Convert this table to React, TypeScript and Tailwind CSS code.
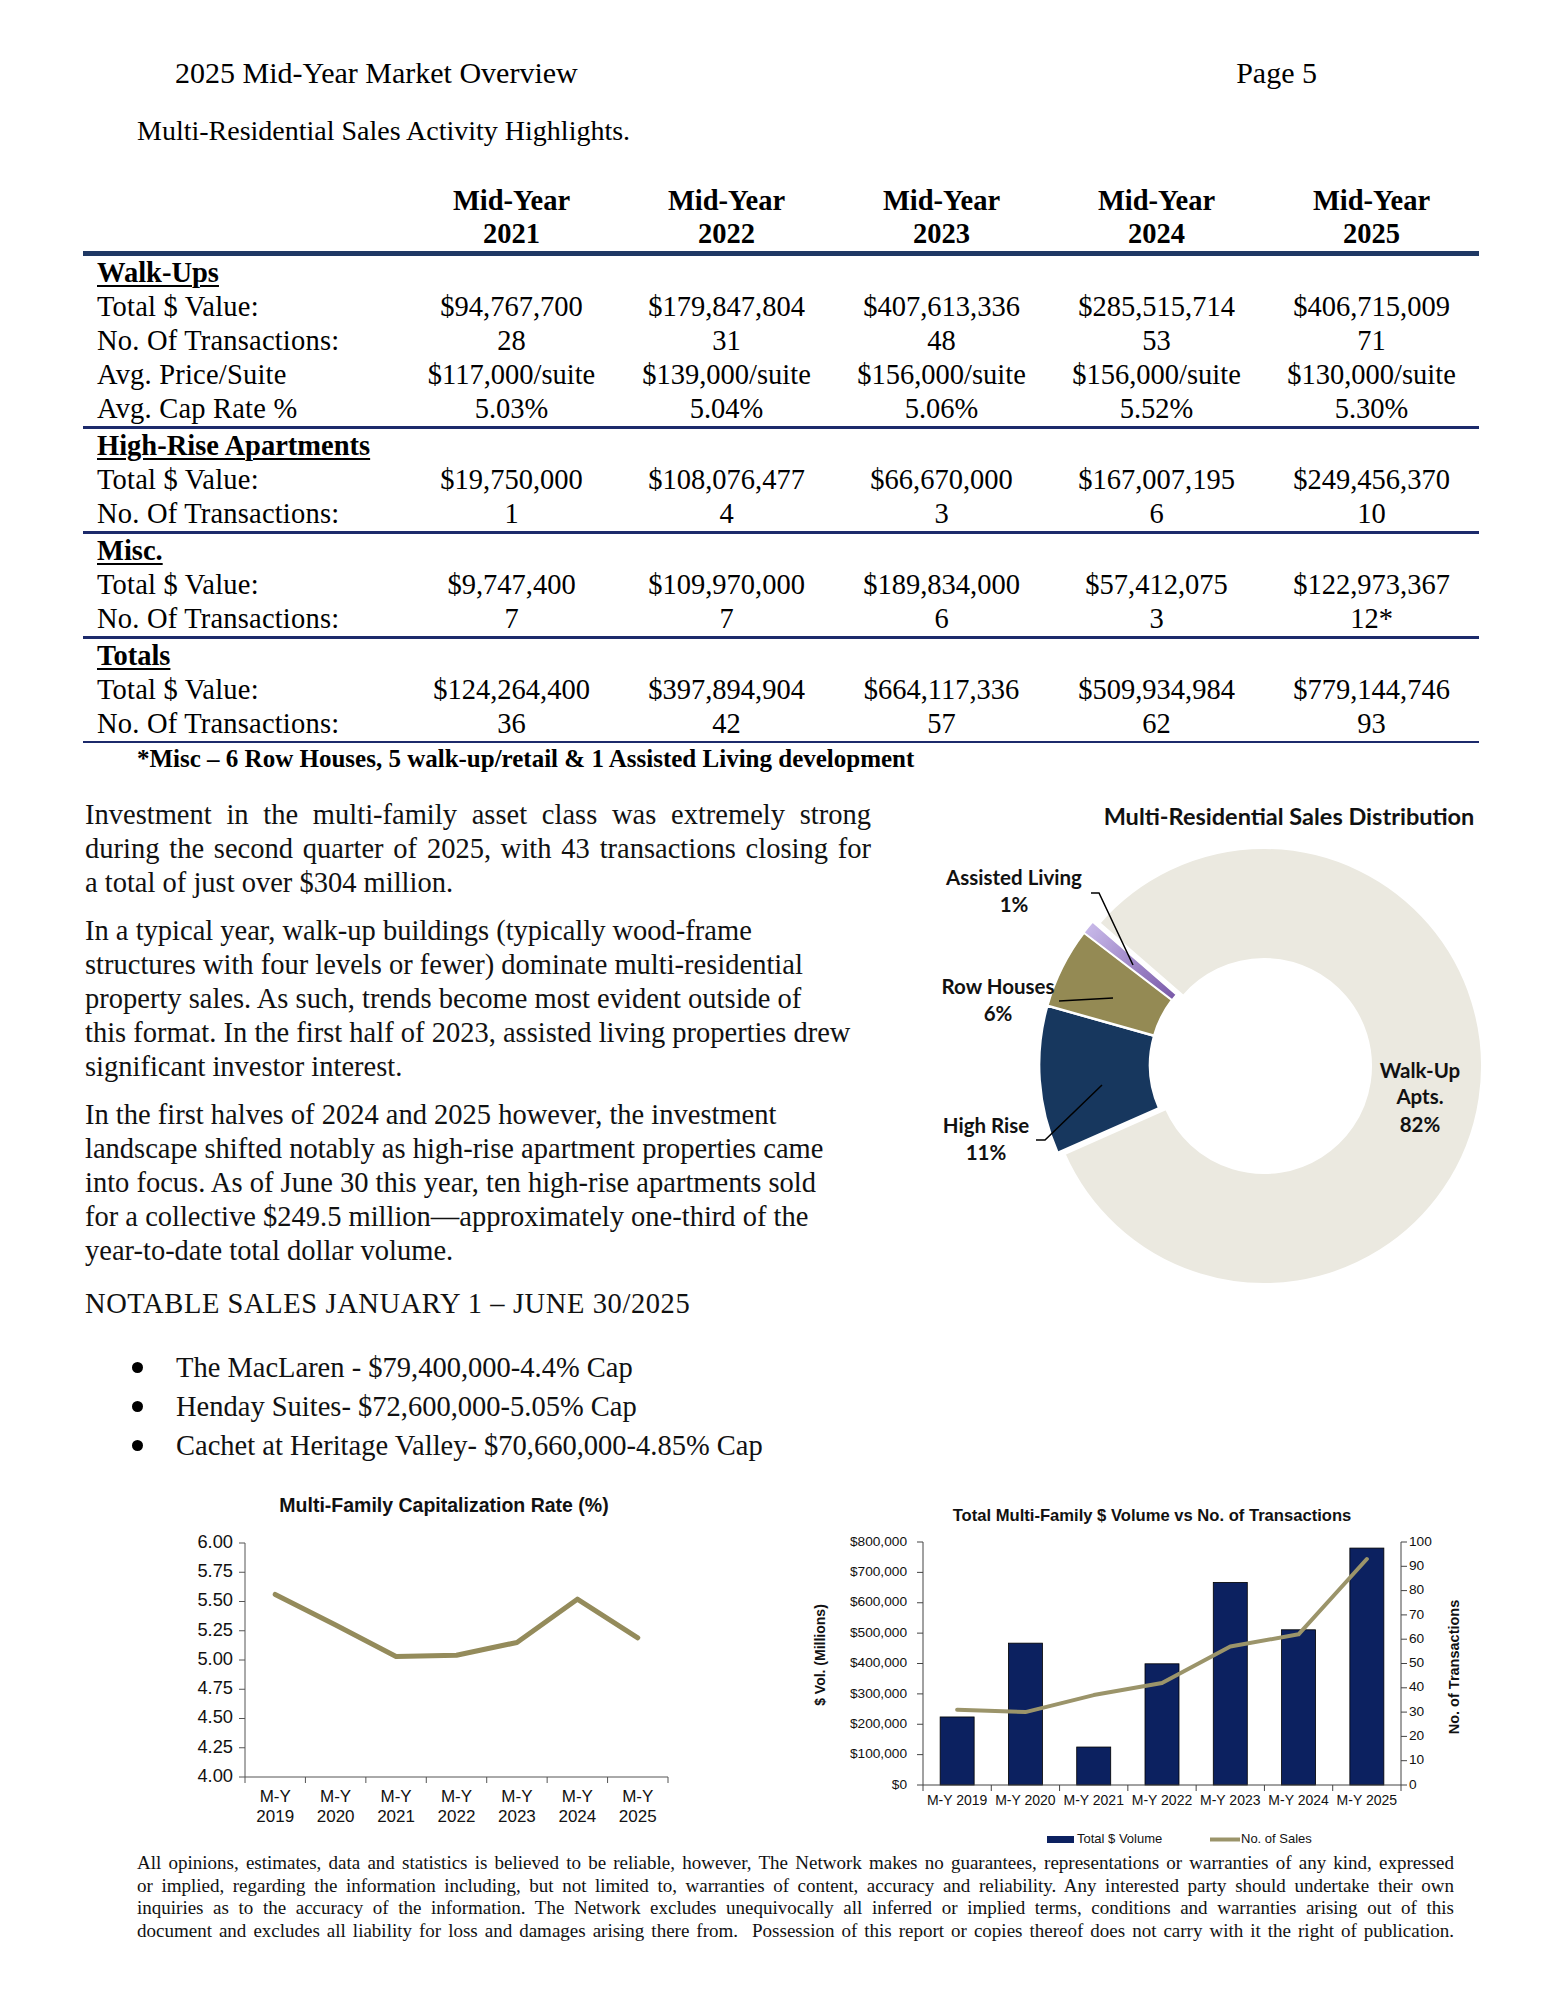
import React from "react";

const years = ["2021", "2022", "2023", "2024", "2025"];

type Row = { label: string; values: string[] };
type Section = { title: string; rows: Row[]; thin?: boolean };

const sections: Section[] = [
  {
    title: "Walk-Ups",
    rows: [
      { label: "Total $ Value:", values: ["$94,767,700", "$179,847,804", "$407,613,336", "$285,515,714", "$406,715,009"] },
      { label: "No. Of Transactions:", values: ["28", "31", "48", "53", "71"] },
      { label: "Avg. Price/Suite", values: ["$117,000/suite", "$139,000/suite", "$156,000/suite", "$156,000/suite", "$130,000/suite"] },
      { label: "Avg. Cap Rate %", values: ["5.03%", "5.04%", "5.06%", "5.52%", "5.30%"] },
    ],
  },
  {
    title: "High-Rise Apartments",
    rows: [
      { label: "Total $ Value:", values: ["$19,750,000", "$108,076,477", "$66,670,000", "$167,007,195", "$249,456,370"] },
      { label: "No. Of Transactions:", values: ["1", "4", "3", "6", "10"] },
    ],
  },
  {
    title: "Misc.",
    rows: [
      { label: "Total $ Value:", values: ["$9,747,400", "$109,970,000", "$189,834,000", "$57,412,075", "$122,973,367"] },
      { label: "No. Of Transactions:", values: ["7", "7", "6", "3", "12*"] },
    ],
  },
  {
    title: "Totals",
    thin: true,
    rows: [
      { label: "Total $ Value:", values: ["$124,264,400", "$397,894,904", "$664,117,336", "$509,934,984", "$779,144,746"] },
      { label: "No. Of Transactions:", values: ["36", "42", "57", "62", "93"] },
    ],
  },
];

function Table() {
  return (
    <div className="ml-[83px] w-[1396px] mt-[36px]">
      <div className="flex font-bold text-[28.5px] leading-[33px]">
        <div className="w-[321px]" />
        {years.map((y) => (
          <div key={y} className="w-[215px] text-center">
            <div>Mid-Year</div>
            <div>{y}</div>
          </div>
        ))}
      </div>
      <div className="mt-[1px] h-[5px] bg-[#1f3864]" />
      {sections.map((s) => (
        <div
          key={s.title}
          className={
            s.thin
              ? "border-b-[2px] border-[#1c2a6b]"
              : "border-b-[3px] border-[#1c2a6b]"
          }
        >
          <div className="h-[34px] leading-[34px] pl-[14px] text-[28.5px] font-bold underline decoration-[1.5px] underline-offset-[3px]">
            {s.title}
          </div>
          {s.rows.map((r) => (
            <div key={r.label} className="flex h-[34px] leading-[34px] text-[28.5px]">
              <div className="w-[321px] pl-[14px] whitespace-nowrap tracking-[0.2px]">{r.label}</div>
              {r.values.map((v, i) => (
                <div key={i} className="w-[215px] text-center whitespace-nowrap">
                  {v}
                </div>
              ))}
            </div>
          ))}
        </div>
      ))}
      <div className="h-[32px] leading-[32px] pl-[54px] text-[25px] font-bold whitespace-nowrap">
        *Misc – 6 Row Houses, 5 walk-up/retail &amp; 1 Assisted Living development
      </div>
    </div>
  );
}

function arc(cx: number, cy: number, R: number, r: number, a0: number, a1: number) {
  const rad = (a: number) => (a * Math.PI) / 180;
  const p = (rr: number, a: number) => [cx + rr * Math.cos(rad(a)), cy + rr * Math.sin(rad(a))];
  const large = a1 - a0 > 180 ? 1 : 0;
  const [x0, y0] = p(R, a0);
  const [x1, y1] = p(R, a1);
  const [x2, y2] = p(r, a1);
  const [x3, y3] = p(r, a0);
  return `M${x0} ${y0} A${R} ${R} 0 ${large} 1 ${x1} ${y1} L${x2} ${y2} A${r} ${r} 0 ${large} 0 ${x3} ${y3} Z`;
}

function Donut() {
  const cx = 1264;
  const cy = 1066;
  const R = 218;
  const r = 107;
  const dx = -6.9;
  const dy = -1.05;
  const lbl = "font-['Lato',sans-serif] font-bold text-[20.5px]";
  return (
    <svg width={645} height={520} viewBox="900 780 645 520" className="block">
      <defs>
        <radialGradient id="alg" gradientUnits="userSpaceOnUse" cx={cx} cy={cy} r={R}>
          <stop offset="0.49" stopColor="#7a5aa9" />
          <stop offset="1" stopColor="#c7b8e8" />
        </radialGradient>
      </defs>
      <text x={1289} y={819} textAnchor="middle" dominantBaseline="middle" className="font-['Lato',sans-serif] font-bold text-[23.5px]" fill="#111">
        Multi-Residential Sales Distribution
      </text>
      <path d={arc(cx, cy, R, r, 221, 516.2)} fill="#ebe9e0" stroke="#ffffff" strokeWidth={2} />
      <g transform={`translate(${dx} ${dy})`}>
        <path d={arc(cx, cy, R, r, 156.2, 195.8)} fill="#17375e" stroke="#ffffff" strokeWidth={2.5} />
        <path d={arc(cx, cy, R, r, 195.8, 217.4)} fill="#948a54" stroke="#ffffff" strokeWidth={2.5} />
        <path d={arc(cx, cy, R, r, 217.4, 221)} fill="url(#alg)" stroke="#ffffff" strokeWidth={1.5} />
      </g>
      <polyline points="1091,893 1099,893 1133,965" fill="none" stroke="#000" strokeWidth={1.5} />
      <line x1={1059} y1={1001} x2={1113} y2={998} stroke="#000" strokeWidth={1.5} />
      <polyline points="1036,1140 1045,1140 1102,1085" fill="none" stroke="#000" strokeWidth={1.5} />
      <g fill="#111" textAnchor="middle" dominantBaseline="middle" className={lbl}>
        <text x={1014} y={880}>Assisted Living</text>
        <text x={1014} y={907}>1%</text>
        <text x={998} y={989}>Row Houses</text>
        <text x={998} y={1016}>6%</text>
        <text x={986} y={1128}>High Rise</text>
        <text x={986} y={1155}>11%</text>
        <text x={1420} y={1073}>Walk-Up</text>
        <text x={1420} y={1099}>Apts.</text>
        <text x={1420} y={1127}>82%</text>
      </g>
    </svg>
  );
}

function CapChart() {
  const vals = [5.56, 5.3, 5.03, 5.04, 5.15, 5.52, 5.19];
  const x0 = 245;
  const x1 = 668;
  const cw = (x1 - x0) / 7;
  const y = (v: number) => 1777 - (v - 4) * 117;
  const ticks = [6, 5.75, 5.5, 5.25, 5, 4.75, 4.5, 4.25, 4];
  const pts = vals.map((v, i) => `${x0 + cw * (i + 0.5)},${y(v)}`).join(" ");
  const sans = "font-['Liberation_Sans',Arial,sans-serif]";
  return (
    <svg width={520} height={360} viewBox="180 1480 520 360" className="block">
      <text x={444} y={1507} textAnchor="middle" dominantBaseline="middle" className={`${sans} font-bold text-[19.5px]`} fill="#111">
        Multi-Family  Capitalization Rate (%)
      </text>
      <line x1={x0} y1={1543} x2={x0} y2={1777} stroke="#555" strokeWidth={1} />
      <line x1={x0} y1={1777} x2={x1} y2={1777} stroke="#555" strokeWidth={1} />
      {ticks.map((t) => (
        <g key={t}>
          <line x1={x0 - 6} y1={y(t)} x2={x0} y2={y(t)} stroke="#555" strokeWidth={1} />
          <text x={233} y={y(t)} textAnchor="end" dominantBaseline="middle" className={`${sans} text-[18.3px]`} fill="#111">
            {t.toFixed(2)}
          </text>
        </g>
      ))}
      {Array.from({ length: 8 }).map((_, i) => (
        <line key={i} x1={x0 + cw * i} y1={1777} x2={x0 + cw * i} y2={1783} stroke="#555" strokeWidth={1} />
      ))}
      {["2019", "2020", "2021", "2022", "2023", "2024", "2025"].map((yr, i) => (
        <g key={yr} className={`${sans} text-[17px]`} fill="#111">
          <text x={x0 + cw * (i + 0.5)} y={1798} textAnchor="middle" dominantBaseline="middle">
            M-Y
          </text>
          <text x={x0 + cw * (i + 0.5)} y={1818} textAnchor="middle" dominantBaseline="middle">
            {yr}
          </text>
        </g>
      ))}
      <polyline points={pts} fill="none" stroke="#948b5b" strokeWidth={5} strokeLinejoin="round" strokeLinecap="round" />
    </svg>
  );
}

function BarChart() {
  const vols = [224, 467, 125, 399, 667, 511, 780];
  const sales = [31, 30, 37, 42, 57, 62, 93];
  const x0 = 923;
  const x1 = 1401;
  const cw = (x1 - x0) / 7;
  const base = 1785;
  const h = 243;
  const yv = (v: number) => base - (v / 800) * h;
  const ys = (n: number) => base - (n / 100) * h;
  const sans = "font-['Liberation_Sans',Arial,sans-serif]";
  const left = [800, 700, 600, 500, 400, 300, 200, 100, 0];
  const right = [100, 90, 80, 70, 60, 50, 40, 30, 20, 10, 0];
  const pts = sales.map((n, i) => `${x0 + cw * (i + 0.5)},${ys(n)}`).join(" ");
  return (
    <svg width={680} height={372} viewBox="800 1480 680 372" className="block">
      <text x={1152} y={1517} textAnchor="middle" dominantBaseline="middle" className={`${sans} font-bold text-[16.6px]`} fill="#111">
        Total Multi-Family $ Volume vs No. of Transactions
      </text>
      {vols.map((v, i) => (
        <rect key={i} x={x0 + cw * (i + 0.5) - 17} y={yv(v)} width={34} height={base - yv(v)} fill="#0c2160" stroke="#000" strokeWidth={0.8} />
      ))}
      <line x1={x0} y1={1542} x2={x0} y2={base} stroke="#444" strokeWidth={1} />
      <line x1={x1} y1={1542} x2={x1} y2={base} stroke="#444" strokeWidth={1} />
      <line x1={x0} y1={base} x2={x1} y2={base} stroke="#444" strokeWidth={1} />
      {left.map((v) => (
        <g key={v}>
          <line x1={x0 - 6} y1={yv(v)} x2={x0} y2={yv(v)} stroke="#444" strokeWidth={1} />
          <text x={907} y={yv(v)} textAnchor="end" dominantBaseline="middle" className={`${sans} text-[13.7px]`} fill="#111">
            {v === 0 ? "$0" : `$${v},000`}
          </text>
        </g>
      ))}
      {right.map((v) => (
        <g key={v}>
          <line x1={x1} y1={ys(v)} x2={x1 + 6} y2={ys(v)} stroke="#444" strokeWidth={1} />
          <text x={1409} y={ys(v)} dominantBaseline="middle" className={`${sans} text-[13.7px]`} fill="#111">
            {v}
          </text>
        </g>
      ))}
      {Array.from({ length: 8 }).map((_, i) => (
        <line key={i} x1={x0 + cw * i} y1={base} x2={x0 + cw * i} y2={base + 6} stroke="#444" strokeWidth={1} />
      ))}
      {["2019", "2020", "2021", "2022", "2023", "2024", "2025"].map((yr, i) => (
        <text key={yr} x={x0 + cw * (i + 0.5)} y={1801} textAnchor="middle" dominantBaseline="middle" className={`${sans} text-[14px]`} fill="#111">
          M-Y {yr}
        </text>
      ))}
      <polyline points={pts} fill="none" stroke="#9b946a" strokeWidth={4} strokeLinejoin="round" strokeLinecap="round" />
      <text x={821} y={1655} transform="rotate(-90 821 1655)" textAnchor="middle" dominantBaseline="middle" className={`${sans} font-bold text-[14px]`} fill="#111">
        $ Vol. (Millions)
      </text>
      <text x={1455} y={1667} transform="rotate(-90 1455 1667)" textAnchor="middle" dominantBaseline="middle" className={`${sans} font-bold text-[14.5px]`} fill="#111">
        No. of Transactions
      </text>
      <rect x={1047} y={1836} width={27} height={7} fill="#0c2160" />
      <text x={1077} y={1840} dominantBaseline="middle" className={`${sans} text-[13px]`} fill="#111">
        Total $ Volume
      </text>
      <line x1={1210} y1={1839.5} x2={1240} y2={1839.5} stroke="#9b946a" strokeWidth={4} />
      <text x={1241} y={1840} dominantBaseline="middle" className={`${sans} text-[13px]`} fill="#111">
        No. of Sales
      </text>
    </svg>
  );
}

const J = "text-justify [text-align-last:justify]";

export default function App() {
  return (
    <div className="w-[1545px] h-[2000px] bg-white text-black font-['Liberation_Serif',serif] overflow-hidden">
      <div className="pt-[56px] ml-[175px] w-[1142px] flex justify-between text-[30px] leading-[34px]">
        <span>2025 Mid-Year Market Overview</span>
        <span>Page 5</span>
      </div>
      <div className="mt-[24px] ml-[137px] text-[28px] leading-[34px]">
        Multi-Residential Sales Activity Highlights.
      </div>
      <Table />

      <div className="flex h-[705px]">
        <div className="ml-[85px] w-[786px] pt-[23px] text-[28.5px] leading-[34px] text-[#111]">
          <div>
            <div className={J}>Investment in the multi-family asset class was extremely strong</div>
            <div className={J}>during the second quarter of 2025, with 43 transactions closing for</div>
            <div className="whitespace-nowrap">a total of just over $304 million.</div>
          </div>
          <div className="mt-[14px] whitespace-nowrap">
            <div>In a typical year, walk-up buildings (typically wood-frame</div>
            <div>structures with four levels or fewer) dominate multi-residential</div>
            <div>property sales. As such, trends become most evident outside of</div>
            <div>this format. In the first half of 2023, assisted living properties drew</div>
            <div>significant investor interest.</div>
          </div>
          <div className="mt-[14px] whitespace-nowrap">
            <div>In the first halves of 2024 and 2025 however, the investment</div>
            <div>landscape shifted notably as high-rise apartment properties came</div>
            <div>into focus. As of June 30 this year, ten high-rise apartments sold</div>
            <div>for a collective $249.5 million—approximately one-third of the</div>
            <div>year-to-date total dollar volume.</div>
          </div>
          <div className="mt-[19px] whitespace-nowrap tracking-[0.6px]">NOTABLE SALES JANUARY 1 – JUNE 30/2025</div>
          <ul className="mt-[27px] leading-[39px]">
            {[
              "The MacLaren - $79,400,000-4.4% Cap",
              "Henday Suites- $72,600,000-5.05% Cap",
              "Cachet at Heritage Valley- $70,660,000-4.85% Cap",
            ].map((t) => (
              <li key={t} className="flex items-center whitespace-nowrap">
                <span className="ml-[47px] w-[11px] h-[11px] rounded-full bg-black" />
                <span className="ml-[33px]">{t}</span>
              </li>
            ))}
          </ul>
        </div>
        <div className="ml-[29px] mt-[5px]">
          <Donut />
        </div>
      </div>

      <div className="flex h-[372px]">
        <div className="ml-[180px]">
          <CapChart />
        </div>
        <div className="ml-[100px]">
          <BarChart />
        </div>
      </div>

      <div className="ml-[137px] w-[1317px] text-[19px] leading-[22.5px] text-[#111]">
        <div className={J}>
          All opinions, estimates, data and statistics is believed to be reliable, however, The Network makes no guarantees, representations or warranties of any kind, expressed
        </div>
        <div className={J}>
          or implied, regarding the information including, but not limited to, warranties of content, accuracy and reliability. Any interested party should undertake their own
        </div>
        <div className={J}>
          inquiries as to the accuracy of the information. The Network excludes unequivocally all inferred or implied terms, conditions and warranties arising out of this
        </div>
        <div className={J}>
          document and excludes all liability for loss and damages arising there from.&nbsp; Possession of this report or copies thereof does not carry with it the right of publication.
        </div>
      </div>
    </div>
  );
}
